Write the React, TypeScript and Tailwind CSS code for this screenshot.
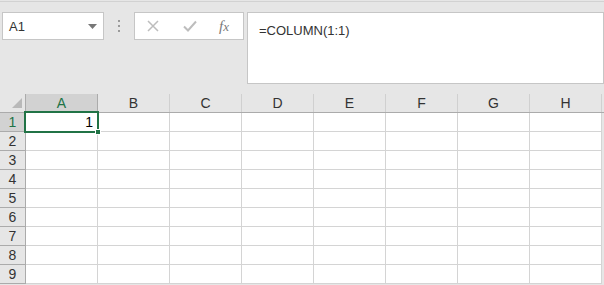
import React from "react";

const cols = ["A", "B", "C", "D", "E", "F", "G", "H"];
const rows = [1, 2, 3, 4, 5, 6, 7, 8, 9];

export default function App() {
  return (
    <div
      className="relative w-[604px] h-[285px] overflow-hidden bg-[#e6e6e6]"
      style={{ fontFamily: '"Liberation Sans", Arial, sans-serif' }}
    >
      {/* toolbar */}
      <div className="h-[94px] pt-[1px]">
        <div className="h-px bg-[#d2d2d2]" />
        <div className="flex items-start pt-[10px]">
          <div className="ml-[2px] w-[102px] h-[28px] bg-white border border-[#c6c6c6] flex items-center justify-between pl-[6px] pr-[6px]">
            <span className="text-[13px] text-[#333] leading-none">A1</span>
            <svg width="9" height="5" viewBox="0 0 9 5">
              <polygon points="0,0 9,0 4.5,5" fill="#777" />
            </svg>
          </div>
          <div className="w-[30px] h-[28px] flex flex-col items-center justify-center gap-[3px]">
            <div className="w-[2px] h-[2px] bg-[#9a9a9a]" />
            <div className="w-[2px] h-[2px] bg-[#9a9a9a]" />
            <div className="w-[2px] h-[2px] bg-[#9a9a9a]" />
          </div>
          <div className="w-[110px] h-[28px] bg-white border border-[#c6c6c6] flex items-center">
            <svg className="ml-[12px]" width="12" height="12" viewBox="0 0 12 12">
              <path d="M1 1 L11 11 M11 1 L1 11" stroke="#bdbdbd" strokeWidth="1.5" />
            </svg>
            <svg className="ml-[24px]" width="14" height="12" viewBox="0 0 14 12">
              <path d="M1 6.5 L5 10.5 L13 1.5" stroke="#bdbdbd" strokeWidth="2" fill="none" />
            </svg>
            <span
              className="ml-[22px] text-[15px] italic text-[#7a7a7a] leading-none"
              style={{ fontFamily: '"Liberation Serif", "Times New Roman", serif' }}
            >
              f<span className="text-[13px]">x</span>
            </span>
          </div>
          <div className="ml-[3px] flex-1 h-[72px] bg-white border border-[#c6c6c6] pl-[11px] pt-[5px]">
            <span className="text-[13px] text-[#333]">=COLUMN(1:1)</span>
          </div>
        </div>
      </div>

      {/* grid */}
      <div className="relative">
        <div className="flex h-[19px] border-b border-[#ababab]">
          <div className="w-[26px] border-r border-[#ababab] relative">
            <svg className="absolute left-[12px] top-[4px]" width="10" height="10" viewBox="0 0 10 10">
              <polygon points="10,0 10,10 0,10" fill="#b9b9b9" />
            </svg>
          </div>
          {cols.map((c, i) => (
            <div
              key={c}
              className={
                i === 0
                  ? "w-[72px] border-r border-[#ababab] bg-[#d2d2d2] text-[#217346] text-[14px] flex items-center justify-center"
                  : "w-[72px] border-r border-[#d0d0d0] text-[#333] text-[14px] flex items-center justify-center"
              }
            >
              {c}
            </div>
          ))}
        </div>
        {rows.map((r) => (
          <div key={r} className="flex h-[19px]">
            <div
              className={
                r === 1
                  ? "w-[26px] border-r border-b border-[#ababab] bg-[#d2d2d2] text-[#217346] text-[14px] flex items-center justify-center"
                  : "w-[26px] border-r border-b border-[#ababab] bg-[#e6e6e6] text-[#333] text-[14px] flex items-center justify-center"
              }
            >
              {r}
            </div>
            {cols.map((c) => (
              <div
                key={c}
                className="w-[72px] bg-white border-r border-b border-[#d4d4d4] text-[14px] text-[#000] flex items-center justify-end pr-[4px]"
              >
                {r === 1 && c === "A" ? "1" : ""}
              </div>
            ))}
          </div>
        ))}
        {/* selection */}
        <div className="absolute left-[24px] top-[17px] w-[75px] h-[22px] border-2 border-[#217346]" />
        <div className="absolute left-[95px] top-[35px] w-[6px] h-[6px] bg-[#217346] border border-white" />
      </div>
    </div>
  );
}
